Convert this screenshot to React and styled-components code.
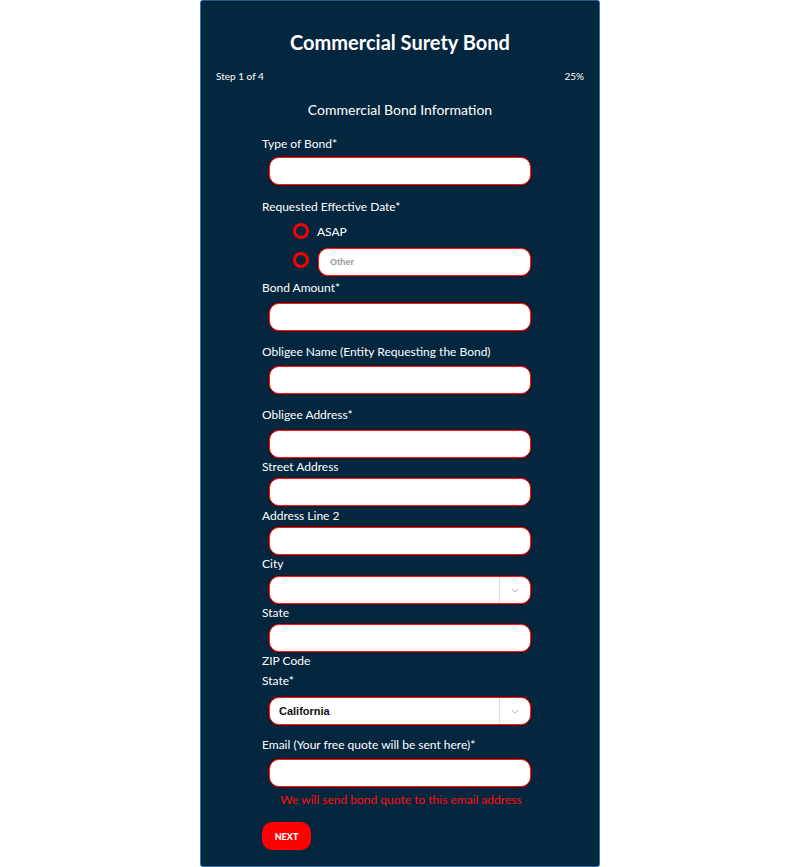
import React from "react";
import styled, { createGlobalStyle } from "styled-components";

const Global = createGlobalStyle`
  html, body { margin: 0; padding: 0; background: #ffffff; }
  body { font-family: "Lato", "Open Sans", sans-serif; }
  * { box-sizing: border-box; }
`;

const Panel = styled.div`
  width: 400px;
  min-height: 867px;
  margin: 0 auto;
  background: #05263f;
  border: 1px solid #2f7fc0;
  border-top-color: #1d5f94;
  box-shadow: inset 0 0 0 1px #021a2c;
  border-radius: 3px;
  padding: 28px 15px 16px;
  color: #ffffff;
`;

const Title = styled.h1`
  margin: 0;
  text-align: center;
  font-size: 20px;
  line-height: 26px;
  font-weight: 700;
`;

const StepRow = styled.div`
  display: flex;
  justify-content: space-between;
  font-size: 10px;
  line-height: 12px;
  margin-top: 15px;
`;

const Section = styled.h2`
  margin: 19px 0 0;
  text-align: center;
  font-size: 14px;
  line-height: 17px;
  font-weight: 400;
`;

const Form = styled.div`
  width: 270px;
  margin: 18px 0 0 46px;
  display: flex;
  flex-direction: column;
`;

const Label = styled.div`
  font-size: 12px;
  line-height: 15px;
  margin-top: ${(p) => p.$top || 0}px;
`;

const InputBox = styled.div`
  height: 28px;
  width: ${(p) => p.$width || 262}px;
  margin-left: ${(p) => (p.$inset === undefined ? 7 : p.$inset)}px;
  margin-top: ${(p) => p.$top || 0}px;
  background: #ffffff;
  border: 1px solid #ff1a1a;
  box-shadow: 0 0 0 1px #3a0d16;
  border-radius: 10px;
  display: flex;
  align-items: center;
  font-family: "Liberation Sans", Arial, sans-serif;
  color: #111;
  flex: none;
`;

const Placeholder = styled.span`
  font-size: 9px;
  color: #9a9a9a;
  padding-left: 11px;
  font-weight: 700;
`;

const Value = styled.span`
  flex: 1;
  font-size: 11px;
  font-weight: 700;
  padding-left: 9px;
`;

const SelectFill = styled.span`
  flex: 1;
`;

const Divider = styled.span`
  width: 1px;
  height: 26px;
  background: #dddddd;
`;

const Chevron = styled.span`
  width: 30px;
  display: flex;
  justify-content: center;
  align-items: center;
`;

const RadioRow = styled.div`
  display: flex;
  align-items: ${(p) => (p.$top ? "flex-start" : "center")};
  margin-left: 31px;
  margin-top: ${(p) => p.$mt || 0}px;
`;

const Ring = styled.span`
  width: 16px;
  height: 16px;
  border-radius: 50%;
  border: 3px solid #ff0000;
  flex: none;
  margin-top: ${(p) => p.$mt || 0}px;
`;

const RadioText = styled.span`
  font-size: 12px;
  line-height: 15px;
  margin-left: 8px;
`;

const Note = styled.div`
  margin: 5px 0 0 -46px;
  width: 370px;
  text-align: center;
  color: #ff1010;
  font-size: 12px;
  line-height: 15px;
`;

const NextButton = styled.button`
  margin-top: 15px;
  width: 49px;
  height: 28px;
  border: none;
  border-radius: 10px;
  background: #ff0000;
  color: #ffffff;
  font-family: "Lato", sans-serif;
  font-weight: 900;
  font-size: 9px;
  padding: 0;
`;

const ChevronIcon = () => (
  <svg width="8" height="5" viewBox="0 0 8 5">
    <path d="M1 1 L4 4 L7 1" fill="none" stroke="#b0b0b0" strokeWidth="1" />
  </svg>
);

const Select = ({ value, top }) => (
  <InputBox $top={top}>
    {value ? <Value>{value}</Value> : <SelectFill />}
    <Divider />
    <Chevron>
      <ChevronIcon />
    </Chevron>
  </InputBox>
);

export default function App() {
  return (
    <>
      <Global />
      <Panel>
        <Title>Commercial Surety Bond</Title>
        <StepRow>
          <span>Step 1 of 4</span>
          <span>25%</span>
        </StepRow>
        <Section>Commercial Bond Information</Section>
        <Form>
          <Label>Type of Bond*</Label>
          <InputBox $top={6} />
          <Label $top={14}>Requested Effective Date*</Label>
          <RadioRow $mt={9}>
            <Ring />
            <RadioText>ASAP</RadioText>
          </RadioRow>
          <RadioRow $mt={9} $top>
            <Ring $mt={4} />
            <InputBox $inset={9} $width={213}>
              <Placeholder>Other</Placeholder>
            </InputBox>
          </RadioRow>
          <Label $top={4}>Bond Amount*</Label>
          <InputBox $top={8} />
          <Label $top={13}>Obligee Name (Entity Requesting the Bond)</Label>
          <InputBox $top={7} />
          <Label $top={13}>Obligee Address*</Label>
          <InputBox $top={8} />
          <Label $top={1}>Street Address</Label>
          <InputBox $top={4} />
          <Label $top={2}>Address Line 2</Label>
          <InputBox $top={4} />
          <Label $top={1}>City</Label>
          <Select top={5} />
          <Label $top={1}>State</Label>
          <InputBox $top={4} />
          <Label $top={1}>ZIP Code</Label>
          <Label $top={5}>State*</Label>
          <Select top={9} value="California" />
          <Label $top={12}>Email (Your free quote will be sent here)*</Label>
          <InputBox $top={7} />
          <Note>We will send bond quote to this email address</Note>
          <NextButton>NEXT</NextButton>
        </Form>
      </Panel>
    </>
  );
}
